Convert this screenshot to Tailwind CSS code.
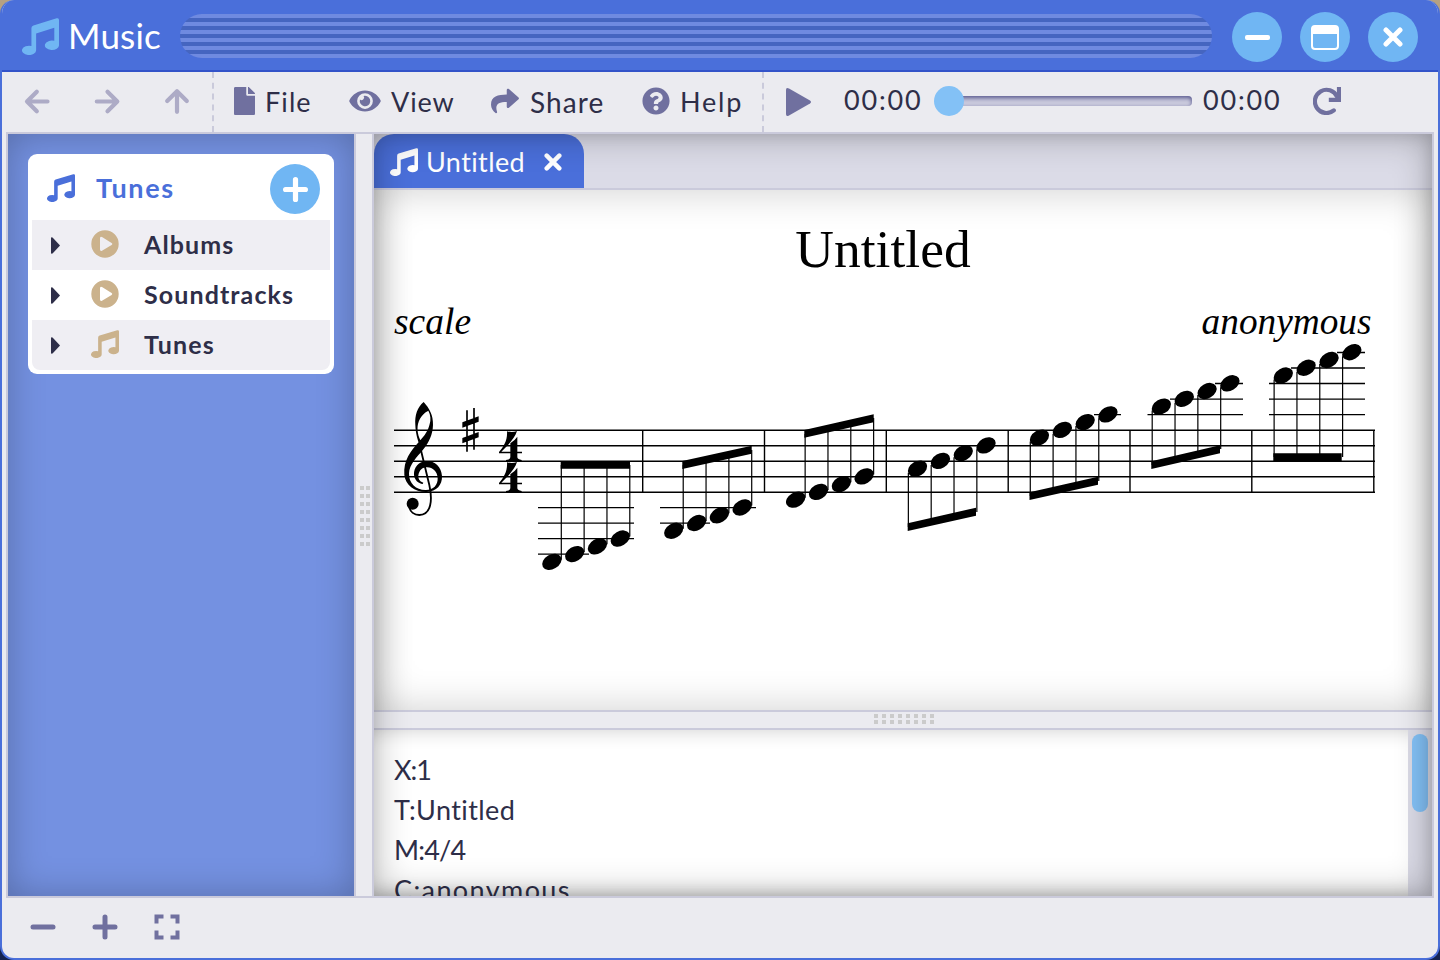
<!DOCTYPE html>
<html lang="en">
<head>
<meta charset="utf-8">
<title>Music</title>
<script src="https://cdn.jsdelivr.net/npm/@tailwindcss/browser@4"></script>
</head>
<body class="h-[960px] w-[1440px] overflow-hidden bg-linear-to-b from-[#b5a182] from-50% to-[#14234f] to-50% font-['Lato','Open_Sans',sans-serif] text-[#2e2e48] [font-variant-ligatures:none]">
<svg class="hidden">
  <symbol id="music" viewBox="0 0 110 110"><path d="M28 30Q28 24 34 22L103 1Q110 -1 110 6V81A21 14 0 1 1 96 68V29L42 46V96A21 14 0 1 1 28 83Z"/></symbol>
  <symbol id="x" viewBox="0 0 20 20"><path d="M3 3L17 17M17 3L3 17" fill="none" stroke="currentColor" stroke-width="5" stroke-linecap="round"/></symbol>
  <symbol id="circle-play" viewBox="0 0 28 28"><path fill-rule="evenodd" d="M14 .3a13.700 13.700 0 1 0 0 27.400a13.700 13.700 0 1 0 0-27.400ZM9 8.2Q9 6 11 7L20.600 12.900Q22 14 20.600 15L11 20.800Q9 21.500 9 19.500Z"/></symbol>
</svg>
<main class="flex h-full w-full flex-col overflow-hidden rounded-[14px] border-2 border-t-0 border-[#4a6fda] bg-[#ebebf0]">
  <header class="flex h-[72px] shrink-0 items-center border-b-2 border-[#3353c9] bg-[#4a6fda] pt-[2px] pr-5 pl-5">
    <svg class="h-[37px] w-[37px] fill-[#70b6f3]"><use href="#music"/></svg>
    <h1 class="ml-[9px] w-[112px] pb-[3px] text-[35px] leading-[44px] tracking-[0.2px] whitespace-nowrap text-white">Music</h1>
    <div class="h-11 w-[1032px] shrink-0 rounded-full bg-[repeating-linear-gradient(to_bottom,#6f8ae0_0px,#6f8ae0_4px,#4565c0_4px,#4565c0_8px)]"></div>
    <div class="ml-5 flex shrink-0 gap-[18px] pt-[2px] text-white">
      <button class="flex size-[50px] items-center justify-center rounded-full bg-[#70b6f3]"><span class="h-[5px] w-[25px] rounded-[2px] bg-white"></span></button>
      <button class="flex size-[50px] items-center justify-center rounded-full bg-[#70b6f3]"><span class="h-[25px] w-7 rounded-[4px] border-2 border-t-[9px] border-white"></span></button>
      <button class="flex size-[50px] items-center justify-center rounded-full bg-[#70b6f3]"><svg class="size-5"><use href="#x"/></svg></button>
    </div>
  </header>

  <nav class="flex h-[60px] shrink-0 items-center text-[27px] whitespace-nowrap">
    <div class="flex h-full items-center border-r-2 border-dashed border-[#cacadb]">
      <svg class="h-7 w-[70px] fill-none stroke-[#adabc6] stroke-[4.2]" stroke-linecap="round" stroke-linejoin="round" viewBox="0 0 70 28"><path d="M45.500 13.500H25.500M34.800 3.700L25 13.500L34.800 23.300"/></svg>
      <svg class="h-7 w-[70px] fill-none stroke-[#adabc6] stroke-[4.2]" stroke-linecap="round" stroke-linejoin="round" viewBox="0 0 70 28"><path d="M24.800 13.500H44.800M35.500 3.700L45.300 13.500L35.500 23.300"/></svg>
      <svg class="h-7 w-[70px] fill-none stroke-[#adabc6] stroke-[4.2]" stroke-linecap="round" stroke-linejoin="round" viewBox="0 0 70 28"><path d="M35 23.800V3.800M25.200 13L35 3.200L44.800 13"/></svg>
    </div>
    <div class="flex h-full items-center border-r-2 border-dashed border-[#cacadb]">
      <a class="flex w-[117px] items-center pl-5"><svg class="mr-[10px] mb-[2px] h-7 w-[21px] shrink-0 fill-[#70709f]" viewBox="0 0 384 512"><path d="M224 136V0H24C10.700 0 0 10.700 0 24v464c0 13.300 10.700 24 24 24h336c13.300 0 24-10.700 24-24V160H248c-13.200 0-24-10.800-24-24zm160-14.100v6.100H256V0h6.100c6.400 0 12.500 2.500 17 7l97.900 98c4.500 4.500 7 10.600 7 16.900z"/></svg><span class="tracking-[1.1px]">File</span></a>
      <a class="flex w-[143px] items-center pl-[18px]"><svg class="mr-[10px] mb-[2px] h-7 w-8 shrink-0 fill-[#70709f]" viewBox="0 0 576 512"><path d="M572.520 241.400C518.290 135.590 410.930 64 288 64S57.680 135.640 3.480 241.410a32.350 32.350 0 0 0 0 29.190C57.710 376.410 165.070 448 288 448s230.320-71.640 284.520-177.410a32.350 32.350 0 0 0 0-29.190zM288 400a144 144 0 1 1 144-144 143.930 143.930 0 0 1-144 144zm0-240a95.310 95.310 0 0 0-25.310 3.790 47.850 47.850 0 0 1-66.900 66.900A95.780 95.780 0 1 0 288 160z"/></svg><span class="tracking-[0.9px]">View</span></a>
      <a class="flex w-[149px] items-center pl-[17px]"><svg class="mr-[10px] mb-[2px] size-7 shrink-0 fill-[#70709f]" viewBox="0 0 512 512"><path d="M503.691 189.836L327.687 37.851C312.281 24.546 288 35.347 288 56.015v80.053C127.371 137.907 0 170.100 0 322.326c0 61.441 39.581 122.309 83.333 154.132 13.653 9.931 33.111-2.533 28.077-18.631C66.066 312.814 132.917 274.316 288 272.085V360c0 20.700 24.300 31.453 39.687 18.164l176.004-152c11.071-9.562 11.086-26.753 0-36.328z"/></svg><span class="ml-px text-[28px] tracking-[1.1px]">Share</span></a>
      <a class="flex w-[139px] items-center pl-[19px]"><svg class="mr-[10px] mb-[2px] size-7 shrink-0 fill-[#70709f]" viewBox="0 0 512 512"><path d="M504 256c0 136.997-111.043 248-248 248S8 392.997 8 256C8 119.083 119.043 8 256 8s248 111.083 248 248zM262.655 90c-54.497 0-89.255 22.957-116.549 63.758-3.536 5.286-2.353 12.415 2.715 16.258l34.699 26.310c5.205 3.947 12.621 3.008 16.665-2.122 17.864-22.658 30.113-35.797 57.303-35.797 20.429 0 45.698 13.148 45.698 32.958 0 14.976-12.363 22.667-32.534 33.976C247.128 238.528 216 254.941 216 296v4c0 6.627 5.373 12 12 12h56c6.627 0 12-5.373 12-12v-1.333c0-28.462 83.186-29.647 83.186-106.667 0-58.002-60.165-102-116.531-102zM256 338c-25.365 0-46 20.635-46 46 0 25.364 20.635 46 46 46s46-20.636 46-46c0-25.364-20.635-46-46-46z"/></svg><span class="tracking-[1.8px]">Help</span></a>
    </div>
    <svg class="ml-[22px] h-7 w-[25px] shrink-0 fill-[#70709f]" viewBox="0 0 25 28"><path d="M0 2Q0 -1 3 .5L24 12.500Q26 14 24 15.500L3 27.500Q0 29 0 26Z"/></svg>
    <span class="ml-[33px] w-[90px] pb-[3px] tracking-[1.8px]">00:00</span>
    <div class="mb-[2px] flex h-[30px] w-[258px] items-center">
      <div class="z-10 size-[30px] shrink-0 rounded-full bg-[#83c1f6]"></div>
      <div class="-ml-3 h-[10px] grow rounded-[4px] bg-[#c9c9dc] shadow-[inset_0_2px_4px_#55558c]"></div>
    </div>
    <span class="ml-[11px] w-[110px] pb-[3px] tracking-[1.8px]">00:00</span>
    <svg class="mb-[2px] size-7 fill-none stroke-[#70709f] stroke-[4.2]" viewBox="0 0 28 28"><path d="M20.800 23.400A11.600 11.600 0 1 1 24 9.500" stroke-linecap="round"/><path d="M26 0V12.900H15.800" stroke-linejoin="miter"/></svg>
  </nav>

  <section class="mx-1 flex h-[766px] shrink-0 border-2 border-[#cacadb]">
    <aside class="h-full w-[348px] shrink-0 border-r-2 border-[#cacadb] bg-[#7491e1] p-5 shadow-[inset_0_0_36px_rgba(0,0,0,0.25)]">
      <div class="h-[220px] w-[306px] rounded-[9px] bg-white px-1 pb-1">
        <div class="flex h-[66px] items-center pt-1 pr-[10px] pl-[15px]">
          <svg class="mb-[3px] size-7 fill-[#4a6fda]"><use href="#music"/></svg>
          <h2 class="ml-[21px] grow pb-[2px] text-[27px] font-bold tracking-[1.7px] text-[#4a6fda]">Tunes</h2>
          <button class="flex size-[50px] items-center justify-center rounded-full bg-[#70b6f3]"><svg class="size-[25px] fill-none stroke-white stroke-[5.2]" viewBox="0 0 25 25"><path d="M2.600 12.500H22.400M12.500 2.600V22.400" stroke-linecap="round"/></svg></button>
        </div>
        <div class="overflow-hidden rounded-b-[8px] text-[25px] font-bold tracking-[1.1px]">
          <div class="flex h-[50px] items-center bg-[#efeef3] pl-[19px]"><svg class="h-[17px] w-[9px] fill-[#2e2e48]" viewBox="0 0 9 17"><path d="M0 1Q0 0 1.500 .5L9 8.500L1.500 16.500Q0 17 0 16Z"/></svg><svg class="mb-[3px] ml-[31px] size-7 fill-[#cbb28c]"><use href="#circle-play"/></svg><span class="ml-[25px]">Albums</span></div>
          <div class="flex h-[50px] items-center pl-[19px]"><svg class="h-[17px] w-[9px] fill-[#2e2e48]" viewBox="0 0 9 17"><path d="M0 1Q0 0 1.500 .5L9 8.500L1.500 16.500Q0 17 0 16Z"/></svg><svg class="mb-[3px] ml-[31px] size-7 fill-[#cbb28c]"><use href="#circle-play"/></svg><span class="ml-[25px]">Soundtracks</span></div>
          <div class="flex h-[50px] items-center bg-[#efeef3] pl-[19px]"><svg class="h-[17px] w-[9px] fill-[#2e2e48]" viewBox="0 0 9 17"><path d="M0 1Q0 0 1.500 .5L9 8.500L1.500 16.500Q0 17 0 16Z"/></svg><svg class="mb-[3px] ml-[31px] size-7 fill-[#cbb28c]"><use href="#music"/></svg><span class="ml-[25px]">Tunes</span></div>
        </div>
      </div>
    </aside>
    <div class="flex w-4 shrink-0 items-center pt-[2px] pl-1">
      <div class="grid grid-cols-2 gap-x-[2px] gap-y-1" id="grip-v"></div>
    </div>
    <div class="relative flex grow flex-col border-l-2 border-[#cacadb]">
      <div class="flex h-14 shrink-0 border-b-2 border-[#cacadb] bg-[#dbdbe7]">
        <div class="flex h-[54px] w-[210px] items-center rounded-t-[20px] bg-[#4a6fda] pt-[2px] pl-4 text-white">
          <svg class="mb-px size-7 fill-white"><use href="#music"/></svg>
          <span class="ml-2 w-[118px] text-[27px] tracking-[0.4px]">Untitled</span>
          <svg class="size-[18px]"><use href="#x"/></svg>
        </div>
      </div>
      <div class="h-[520px] shrink-0 bg-white shadow-[inset_0_0_40px_rgba(0,0,0,0.2)]">
        <svg id="score" class="block h-[520px] w-[1058px] font-['Liberation_Serif',serif]" viewBox="374 190 1058 520">
          <text x="883" y="266.500" font-size="53.500" text-anchor="middle">Untitled</text>
          <text x="394" y="333.500" font-size="37.500" font-style="italic">scale</text>
          <text x="1371.500" y="333.500" font-size="37.300" font-style="italic" text-anchor="end">anonymous</text>
          <path fill="none" stroke="#000" stroke-width="1.400" d="M394 430.300H1375M394 445.700H1375M394 461.200H1375M394 476.700H1375M394 492.200H1375M642.700 430V492.500M764.500 430V492.500M886.300 430V492.500M1008.200 430V492.500M1130 430V492.500M1251.800 430V492.500M1373.800 430V492.500
          M538 507.600H634M538 523.100H634M538 538.600H634M538 554.100H589M660 507.600H756M660 523.100H710M1094 414.600H1121M1147.500 414.600H1243M1170 399.100H1243M1215 383.500H1243M1269 414.600H1365M1269 399.100H1365M1269 383.500H1365M1291 368H1365M1337 352.500H1365"/>
          <path d="M560.700 461H630V468.800H560.700ZM682.300 461L751.700 445.700V453.700L682.300 468.900ZM804.300 430L873.700 414.300V422.300L804.300 437.800ZM907.700 523.300L976 507.700V515.700L907.700 531ZM1029.500 492.200L1098 476.700V484.700L1029.500 500ZM1151.300 461.200L1220 445.300V453.300L1151.300 468.900ZM1273.300 453.300H1341.700V461H1273.300Z"/>
          <g transform="translate(380 380) scale(.33333)">
            <path d="M131 66C112 82 104 105 106 135C107 160 112 175 118 195L123 184C115 170 110 150 114 132C120 108 136 96 145 92C152 105 153 120 149 132C144 152 136 165 117 185C92 213 70 240 73 285C76 315 105 337 140 336C170 334 187 315 186 288C184 260 165 243 140 243C116 244 101 262 102 284C103 300 115 310 128 312L130 308C118 305 114 295 115 286C118 270 127 262 142 262C158 262 172 275 173 294C174 315 160 330 138 330C110 331 86 312 87 280C88 252 112 230 129 209C147 187 158 165 159 135C160 105 148 85 131 66Z"/>
            <path d="M119 195L122 207L148 315C158 360 154 404 118 405C102 405 91 395 88 382" fill="none" stroke="#000" stroke-width="5.500"/>
            <circle cx="98" cy="371" r="18"/>
            <path d="M258.500 91H263.500V215H258.500ZM279.500 84H284.500V209H279.500ZM247 127L296 109V125L247 143ZM247 174L296 156V172L247 190Z"/>
            <path id="four" d="M381 154Q397 159 411 153C405 175 380 200 364 215L391 215V190Q404 182 412 170V215H426V220H412V232Q413 239 425 240V244H378V240Q390 239 391 232V220H357V216C372 200 383 180 381 154Z"/>
            <use href="#four" y="93"/>
          </g>
        </svg>
      </div>
      <div class="flex h-5 shrink-0 justify-center border-y-2 border-[#cacadb] bg-[#ebebf0] pt-[2px] pl-[2px]">
        <div class="grid h-[10px] grid-cols-8 gap-x-1 gap-y-[2px]" id="grip-h"></div>
      </div>
      <div class="flex h-[166px] shrink-0 overflow-hidden bg-white">
        <div class="grow overflow-hidden pt-5 pl-5 text-[27px] leading-10 shadow-[inset_0_20px_20px_-20px_rgba(0,0,0,0.2),inset_0_-20px_20px_-20px_rgba(0,0,0,0.2)]">
          <p class="tracking-[-1px]">X:1</p><p class="tracking-[0.4px]">T:Untitled</p><p class="tracking-[-0.8px]">M:4/4</p><p class="tracking-[1.4px]">C:anonymous</p>
        </div>
        <div class="w-6 shrink-0 bg-[#dbdbe7] px-1 pt-1"><div class="h-[78px] w-4 rounded-full bg-[#83c1f6]"></div></div>
      </div>
      <div class="pointer-events-none absolute inset-0 shadow-[inset_0_0_36px_rgba(0,0,0,0.3),inset_-2px_0_14px_rgba(0,0,0,0.1)]"></div>
    </div>
  </section>

  <footer class="flex h-[60px] items-center pb-[2px] pl-7">
    <svg class="size-[26px] fill-none stroke-[#70709f] stroke-[5]" viewBox="0 0 26 26"><path d="M3 13H23" stroke-linecap="round"/></svg>
    <svg class="ml-9 size-[26px] fill-none stroke-[#70709f] stroke-[5]" viewBox="0 0 26 26"><path d="M3 13H23M13 3V23" stroke-linecap="round"/></svg>
    <svg class="ml-9 size-[26px] fill-none stroke-[#70709f] stroke-[4]" viewBox="0 0 26 26"><path d="M2.500 9.500V2.500H9.500M16.500 2.500H23.500V9.500M23.500 16.500V23.500H16.500M9.500 23.500H2.500V16.500"/></svg>
  </footer>
</main>
<script>
  for (const id of ['grip-v', 'grip-h'])
    document.getElementById(id).innerHTML = '<i class="block size-1 bg-[#cbcbcb]"></i>'.repeat(16);

  // Seven bars of four beamed notes climbing the scale.
  // beams: y of each beam at its left and right ends
  const beams = [[465, 465], [465, 450], [434, 418], [527, 512], [496, 481], [465, 449], [457, 457]];
  let out = '';
  beams.forEach(([l, r], k) => {
    for (let i = 0; i < 4; i++) {
      const x = 551.8 + 121.92 * k + 22.83 * i, y = 561.8 - 31.05 * k - 7.76 * i;
      const up = k < 3, sx = x + (up ? 9.5 : -9.2), sy = y + (up ? -2 : 4);
      out += `<path d="M${sx} ${sy}V${l + (r - l) * i / 3}" stroke="#000" stroke-width="1.200"/>`;
      out += `<ellipse rx="10.300" ry="7.300" transform="translate(${x} ${y}) rotate(-30)"/>`;
    }
  });
  document.getElementById('score').insertAdjacentHTML('beforeend', out);
</script>
</body>
</html>
